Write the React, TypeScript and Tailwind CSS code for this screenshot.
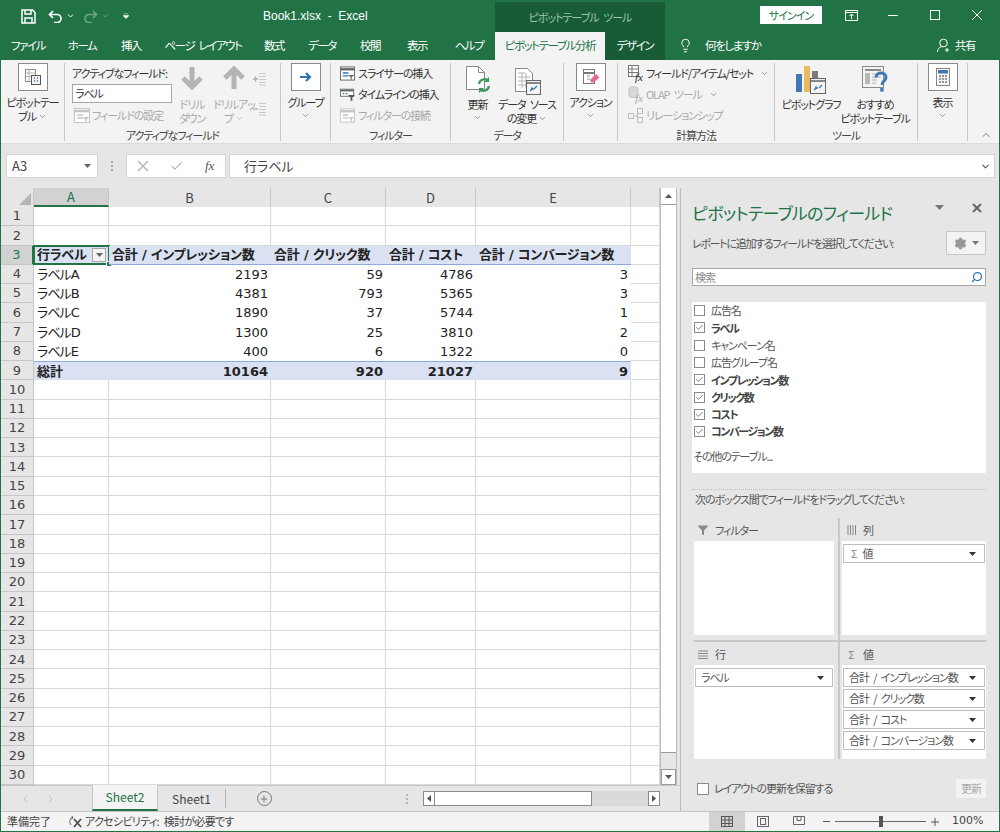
import type { ReactNode } from "react";
import { ChevronDown, Lightbulb, Search, Settings, Plus, Filter, Check } from "lucide-react";
import { clsx } from "clsx";

const tabs = [
  { label: "ファイル", w: "w-[54px]" },
  { label: "ホーム", w: "w-[54px]" },
  { label: "挿入", w: "w-[44px]" },
  { label: "ページ レイアウト", w: "w-[100px]" },
  { label: "数式", w: "w-[42px]" },
  { label: "データ", w: "w-[54px]" },
  { label: "校閲", w: "w-[42px]" },
  { label: "表示", w: "w-[52px]" },
  { label: "ヘルプ", w: "w-[52px]" },
];

const columns = ["A", "B", "C", "D", "E", ""];
const colWidths = ["w-[75px]", "w-[162px]", "w-[115px]", "w-[90px]", "w-[155px]", "flex-1"];

const pivot: Record<number, string[]> = {
  3: ["行ラベル", "合計 / インプレッション数", "合計 / クリック数", "合計 / コスト", "合計 / コンバージョン数"],
  4: ["ラベルA", "2193", "59", "4786", "3"],
  5: ["ラベルB", "4381", "793", "5365", "3"],
  6: ["ラベルC", "1890", "37", "5744", "1"],
  7: ["ラベルD", "1300", "25", "3810", "2"],
  8: ["ラベルE", "400", "6", "1322", "0"],
  9: ["総計", "10164", "920", "21027", "9"],
};

const fields = [
  { name: "広告名", on: false },
  { name: "ラベル", on: true },
  { name: "キャンペーン名", on: false },
  { name: "広告グループ名", on: false },
  { name: "インプレッション数", on: true },
  { name: "クリック数", on: true },
  { name: "コスト", on: true },
  { name: "コンバージョン数", on: true },
];

const rows = Array.from({ length: 30 }, (_, i) => i + 1);

function Sep() {
  return <div className="mt-[3px] h-[78px] w-px shrink-0 bg-[#c8c8c8]" />;
}

function Group({ className, label, children }: { className: string; label?: string; children: ReactNode }) {
  return (
    <div className={clsx("flex h-full shrink-0 flex-col", className)}>
      <div className="h-[69px] shrink-0">{children}</div>
      <div className="text-center text-[11px] leading-[12px] text-[#444]">{label}</div>
    </div>
  );
}

function Chev({ className }: { className?: string }) {
  return <ChevronDown strokeWidth={1.5} className={clsx("size-[9px] text-[#555]", className)} />;
}

function BoxButton({ icon, label }: { icon: ReactNode; label: string }) {
  return (
    <div className="flex flex-col items-center pt-[3px]">
      <div className="flex h-[28px] w-[30px] items-center justify-center border border-[#8a8a8a] bg-white">{icon}</div>
      <div className="mt-[4px] whitespace-nowrap text-[11px] leading-[14px] text-[#333]">{label}</div>
      <Chev className="mt-[2px]" />
    </div>
  );
}

function SmallRow({ icon, label, off, chev }: { icon: ReactNode; label: string; off?: boolean; chev?: boolean }) {
  return (
    <div className={clsx("flex h-[21px] items-center gap-[3px] whitespace-nowrap text-[11px]", off ? "text-[#a9a9a9]" : "text-[#333]")}>
      <span className="flex w-[15px] justify-center">{icon}</span>
      {label}
      {chev && <Chev className="ml-[4px]" />}
    </div>
  );
}

function PivotIcon() {
  return (
    <svg width="18" height="18" viewBox="0 0 18 18" fill="none">
      <rect x="1.5" y="1.5" width="10" height="12" fill="#fff" stroke="#8a8a8a" />
      <path d="M1.5 5h10M1.5 8.5h10M5 1.5v12" stroke="#b0b0b0" />
      <rect x="7.5" y="7.5" width="9" height="9" fill="#f2f2f2" stroke="#555" />
      <path d="M10 10h1M13 10h1M10 13h1M13 13h1" stroke="#2b6cb0" strokeWidth="1.5" />
    </svg>
  );
}

function DrillArrow({ up }: { up?: boolean }) {
  return (
    <svg width="24" height="24" viewBox="0 0 24 24" fill="none" className={up ? "rotate-180" : ""}>
      <path d="M12 1v20M3 12l9 9 9-9" stroke="#b4b4b4" strokeWidth="5" />
    </svg>
  );
}

function TreeIcon({ minus }: { minus?: boolean }) {
  return (
    <svg width="14" height="14" viewBox="0 0 14 14" fill="none">
      <path d="M6 1.5h7M6 4.5h7M6 7.5h7M6 10.5h7M6 13h7" stroke="#c8c8c8" />
      <path d={minus ? "M0 7h5" : "M0 7h5M2.5 4.5v5"} stroke="#b0b0b0" strokeWidth="1.3" />
    </svg>
  );
}

function SlicerIcon({ off }: { off?: boolean }) {
  const c = off ? "#c4c4c4" : "#666";
  return (
    <svg width="16" height="15" viewBox="0 0 16 15" fill="none">
      <rect x="0.5" y="0.5" width="15" height="14" fill="#fff" stroke={c} />
      <path d="M1 3h14" stroke={c} strokeWidth="2.5" />
      {!off && <path d="M3 7h6M3 10h6" stroke="#2f75b5" strokeWidth="1.5" />}
      {off && <path d="M3 7h6M3 10h6" stroke={c} strokeWidth="1.5" />}
      <path d="M9 9h6l-2.4 2.4V14h-1.2v-2.6z" fill={c} />
    </svg>
  );
}

function TimelineIcon() {
  return (
    <svg width="17" height="15" viewBox="0 0 17 15" fill="none">
      <rect x="0.5" y="1.5" width="15" height="8" fill="#fff" stroke="#666" />
      <path d="M1 3h14" stroke="#666" strokeWidth="2" />
      <path d="M3 6.5h2M6.5 6.5h2" stroke="#2f75b5" strokeWidth="1.5" />
      <path d="M9 8h8l-3 3v3.5h-2V11z" fill="#555" />
    </svg>
  );
}

function RefreshIcon() {
  return (
    <svg width="25" height="29" viewBox="0 0 25 29" fill="none">
      <path d="M1.5 1.5h12l6 6v17h-18z" fill="#fff" stroke="#8a8a8a" />
      <path d="M13.5 1.5v6h6" stroke="#8a8a8a" />
      <path d="M14 19a5.5 5.5 0 0 1 9.5-3M24 21a5.5 5.5 0 0 1-9.5 3" stroke="#3a9a5b" strokeWidth="2.2" />
      <path d="M24 12v5h-5zM14 28v-5h5z" fill="#3a9a5b" />
    </svg>
  );
}

function SourceIcon() {
  return (
    <svg width="27" height="28" viewBox="0 0 27 28" fill="none">
      <path d="M1.5 1.5h12l5 5v18h-17z" fill="#fff" stroke="#8a8a8a" />
      <path d="M4 6h7M4 10h12M4 14h12M4 18h12M8 6v15M12 6v15" stroke="#b5b5b5" />
      <rect x="12.5" y="13.5" width="14" height="14" fill="#f4f4f4" stroke="#666" />
      <path d="M13 16h13" stroke="#888" strokeWidth="2" />
      <path d="M16 24l3-3M19 21h-2M19 21v2M23 19l-3 3" stroke="#2f75b5" strokeWidth="1.2" />
    </svg>
  );
}

function ActionIcon() {
  return (
    <svg width="20" height="20" viewBox="0 0 20 20" fill="none">
      <rect x="2.5" y="2.5" width="11" height="14" fill="#fff" stroke="#777" />
      <path d="M2.5 6h11" stroke="#777" strokeWidth="2" />
      <path d="M6 9h3M6 12h3" stroke="#999" />
      <path d="M9 13l6-6 3.5 3.5-6 5h-2z" fill="#e8688a" />
    </svg>
  );
}

function FxIcon({ off, olap }: { off?: boolean; olap?: boolean }) {
  const c = off ? "#c4c4c4" : "#777";
  return (
    <span className="relative flex h-[17px] w-[15px]">
      <svg width="12" height="13" viewBox="0 0 12 13" fill="none">
        {olap ? (
          <path d="M1 3c0-3 9-3 9 0v7c0 2-9 2-9 0z" fill="#d8d8d8" stroke={c} />
        ) : (
          <>
            <rect x="0.5" y="0.5" width="10" height="11" fill="#fff" stroke={c} />
            <path d="M1 4h9M1 7.5h9M4 1v10" stroke={c} />
          </>
        )}
      </svg>
      <span className={clsx("absolute -bottom-[1px] right-0 font-['Liberation_Serif',serif] text-[11px] italic leading-[11px] tracking-normal", off ? "text-[#aaa]" : "text-[#222]")}>fx</span>
    </span>
  );
}

function RelationIcon() {
  return (
    <svg width="15" height="15" viewBox="0 0 15 15" fill="none" stroke="#bdbdbd">
      <rect x="0.5" y="5.5" width="5" height="5" />
      <rect x="9.5" y="0.5" width="5" height="5" />
      <rect x="9.5" y="9.5" width="5" height="5" />
      <path d="M5.5 8h4M9.5 3v9" />
    </svg>
  );
}

function ChartIcon() {
  return (
    <svg width="30" height="28" viewBox="0 0 30 28" fill="none">
      <rect x="0" y="8" width="6" height="18" fill="#3f78b5" />
      <rect x="8" y="0" width="6" height="26" fill="#e9b95f" />
      <rect x="16" y="5" width="6" height="8" fill="#7b7b7b" />
      <rect x="14.5" y="12.5" width="15" height="15" fill="#f4f4f4" stroke="#666" />
      <path d="M15 15h14" stroke="#888" strokeWidth="2" />
      <path d="M18 24l3-3M21 21h-2M21 21v2M26 19l-3 3" stroke="#2f75b5" strokeWidth="1.2" />
    </svg>
  );
}

function RecommendIcon() {
  return (
    <svg width="27" height="28" viewBox="0 0 27 28" fill="none">
      <rect x="0.5" y="0.5" width="21" height="21" fill="#f4f4f4" stroke="#8a8a8a" />
      <path d="M3 4h16" stroke="#8a8a8a" strokeWidth="2" />
      <rect x="3" y="7" width="5" height="11" fill="#b8b8b8" />
      <path d="M10 8h9M10 11h9M10 14h5M10 17h4" stroke="#b0b0b0" />
      <path d="M14 11.5c0-6 10-6 10 0 0 3.5-4 3.5-4 7.5" stroke="#3f78b5" strokeWidth="3" fill="none" />
      <rect x="18.2" y="22" width="3.4" height="3.6" fill="#3f78b5" />
    </svg>
  );
}

function ShowIcon() {
  return (
    <svg width="14" height="18" viewBox="0 0 14 18" fill="none">
      <rect x="0.5" y="0.5" width="13" height="17" fill="#f6f6f6" stroke="#888" />
      <rect x="2" y="2" width="10" height="3.5" fill="#3f78b5" />
      <path d="M3 8h2M6 8h2M9 8h2M3 11h2M6 11h2M9 11h2M3 14h2M6 14h2M9 14h2" stroke="#777" strokeWidth="1.5" />
    </svg>
  );
}

function Ribbon() {
  return (
    <div className="flex h-[84px] shrink-0 items-start border-b border-[#dcdcdc] bg-[#f3f3f3] tracking-[-1.1px]">
      <Group className="w-[63px]">
        <div className="flex flex-col items-center pt-[3px]">
          <div className="flex h-[28px] w-[30px] items-center justify-center border border-[#8a8a8a] bg-white"><PivotIcon /></div>
          <div className="mt-[4px] whitespace-nowrap text-[11px] leading-[14px] text-[#333]">ピボットテー</div>
          <div className="flex items-center gap-[2px] text-[11px] leading-[14px] text-[#333]">ブル<Chev /></div>
        </div>
      </Group>
      <Sep />
      <Group className="w-[215px]" label="アクティブなフィールド">
        <div className="flex pl-[7px] pt-[6px]">
          <div className="w-[100px]">
            <div className="whitespace-nowrap text-[11px] leading-[14px] text-[#333]">アクティブなフィールド:</div>
            <div className="mt-[4px] flex h-[19px] items-center border border-[#a6a6a6] bg-white pl-[2px] text-[11px] text-[#333]">ラベル</div>
            <div className="mt-[3px] flex items-center gap-[2px] whitespace-nowrap text-[11px] leading-[18px] text-[#a9a9a9]">
              <span className="pl-[2px]"><SlicerIcon off /></span>フィールドの設定
            </div>
          </div>
          <div className="ml-[8px] flex w-[24px] flex-col items-center whitespace-nowrap text-[11px] leading-[14px] text-[#a9a9a9]">
            <DrillArrow />
            <div className="mt-[7px]">ドリル</div>
            <div>ダウン</div>
          </div>
          <div className="ml-[14px] flex w-[32px] flex-col items-center whitespace-nowrap text-[11px] leading-[14px] text-[#a9a9a9]">
            <DrillArrow up />
            <div className="mt-[7px]">ドリルアッ</div>
            <div className="flex items-center gap-[2px]">プ<Chev className="text-[#aaa]" /></div>
          </div>
          <div className="ml-[3px] flex flex-col gap-[16px] pt-[6px]">
            <TreeIcon />
            <TreeIcon minus />
          </div>
        </div>
      </Group>
      <Sep />
      <Group className="w-[49px]">
        <BoxButton
          label="グループ"
          icon={
            <svg width="14" height="12" viewBox="0 0 14 12" fill="none">
              <path d="M1 6h10M7 2l4 4-4 4" stroke="#2f75b5" strokeWidth="2.2" />
            </svg>
          }
        />
      </Group>
      <Sep />
      <Group className="w-[119px]" label="フィルター">
        <div className="pl-[9px] pt-[3px]">
          <SmallRow icon={<SlicerIcon />} label="スライサーの挿入" />
          <SmallRow icon={<TimelineIcon />} label="タイムラインの挿入" />
          <SmallRow icon={<SlicerIcon off />} label="フィルターの接続" off />
        </div>
      </Group>
      <Sep />
      <Group className="w-[112px]" label="データ">
        <div className="flex pt-[5px]">
          <div className="ml-[13px] flex w-[27px] flex-col items-center text-[11px] leading-[14px] text-[#333]">
            <RefreshIcon />
            <div className="mt-[3px] whitespace-nowrap">更新</div>
            <Chev className="mt-[2px]" />
          </div>
          <div className="ml-[8px] flex w-[56px] flex-col items-center whitespace-nowrap text-[11px] leading-[14px] text-[#333]">
            <div className="pt-[2px]"><SourceIcon /></div>
            <div className="mt-[2px]">データ ソース</div>
            <div className="flex items-center gap-[2px]">の変更<Chev /></div>
          </div>
        </div>
      </Group>
      <Sep />
      <Group className="w-[53px]">
        <BoxButton label="アクション" icon={<ActionIcon />} />
      </Group>
      <Sep />
      <Group className="w-[156px]" label="計算方法">
        <div className="pl-[10px] pt-[3px]">
          <SmallRow icon={<FxIcon />} label="フィールド/アイテム/セット" chev />
          <SmallRow icon={<FxIcon off olap />} label="OLAP ツール" off chev />
          <SmallRow icon={<RelationIcon />} label="リレーションシップ" off />
        </div>
      </Group>
      <Sep />
      <Group className="w-[142px]" label="ツール">
        <div className="flex pt-[6px] text-[11px] leading-[14px] text-[#333]">
          <div className="ml-[8px] flex w-[56px] flex-col items-center whitespace-nowrap">
            <ChartIcon />
            <div className="mt-[3px]">ピボットグラフ</div>
          </div>
          <div className="ml-[2px] flex w-[68px] flex-col items-center whitespace-nowrap">
            <RecommendIcon />
            <div className="mt-[3px]">おすすめ</div>
            <div>ピボットテーブル</div>
          </div>
        </div>
      </Group>
      <Sep />
      <Group className="w-[49px]">
        <BoxButton label="表示" icon={<ShowIcon />} />
      </Group>
      <Sep />
      <div className="flex h-full flex-1 items-end justify-end pb-[2px] pr-[7px]">
        <ChevronDown strokeWidth={1.5} className="size-[12px] rotate-180 text-[#555]" />
      </div>
    </div>
  );
}

function FormulaBar() {
  return (
    <div className="flex h-[44px] shrink-0 items-start bg-[#e6e6e6] pt-[10px] pl-[5px] pr-[4px]">
      <div className="flex h-[24px] w-[92px] items-center justify-between border border-[#d4d4d4] bg-white pl-[5px] pr-[6px] text-[13px] text-[#444]">
        A3
        <svg width="7" height="4" viewBox="0 0 7 4"><path d="M0 0h7L3.5 4z" fill="#666" /></svg>
      </div>
      <div className="flex h-[24px] w-[28px] items-center justify-center">
        <svg width="3" height="10" viewBox="0 0 3 10"><path d="M1 0v2M1 4v2M1 8v2" stroke="#999" strokeWidth="1.5" /></svg>
      </div>
      <div className="flex h-[24px] w-[100px] items-center border border-[#d4d4d4] bg-white text-[#b0b0b0]">
        <svg width="12" height="12" viewBox="0 0 12 12" className="ml-[10px]"><path d="M1 1l10 10M11 1L1 11" stroke="#b8b8b8" strokeWidth="1.5" /></svg>
        <Check strokeWidth={2} className="ml-[21px] size-[13px]" />
        <span className="ml-[22px] font-['Liberation_Serif',serif] text-[13px] italic text-[#555]">fx</span>
      </div>
      <div className="ml-[3px] flex h-[24px] flex-1 items-center justify-between border border-[#d4d4d4] bg-white pl-[14px] pr-[3px] text-[13px] text-[#444]">
        行ラベル
        <ChevronDown strokeWidth={2.5} className="size-[11px] text-[#555]" />
      </div>
    </div>
  );
}

function Sheet() {
  return (
    <div className="flex min-h-0 flex-1 pr-[3px] font-['DejaVu_Sans','Noto_Sans_CJK_JP',sans-serif] text-[13px] text-[#222] [word-spacing:0px]">
      <div className="flex min-w-0 flex-1 flex-col bg-white">
        <div className="flex h-[19px] shrink-0 bg-[#e6e6e6] text-[13px] text-[#444]">
          <div className="flex w-[33px] shrink-0 items-end justify-end border-r border-[#c6c6c6] p-[2px]">
            <svg width="12" height="12" viewBox="0 0 12 12"><path d="M12 0v12H0z" fill="#b5b5b5" /></svg>
          </div>
          {columns.map((c, i) => (
            <div
              key={i}
              className={clsx(
                "flex shrink-0 items-center justify-center border-r border-[#c6c6c6] font-['Noto_Sans_CJK_JP',sans-serif]",
                colWidths[i],
                i === 0 && "border-b-2 border-b-[#217346] bg-[#d2d2d2] text-[#217346]"
              )}
            >
              {c}
            </div>
          ))}
        </div>
        {rows.map((n) => {
          const data = pivot[n];
          const band = n === 3 || n === 9;
          return (
            <div key={n} className="flex min-h-0 flex-1">
              <div
                className={clsx(
                  "flex w-[33px] shrink-0 items-center justify-center border-b border-r border-[#c6c6c6] text-[13px] text-[#444]",
                  n === 3 ? "border-r-2 border-r-[#217346] bg-[#d2d2d2] text-[#217346]" : "bg-[#e6e6e6]"
                )}
              >
                {n}
              </div>
              {columns.map((_, i) => {
                const inPivot = data && i < 5;
                return (
                  <div
                    key={i}
                    className={clsx(
                      "relative flex shrink-0 items-center whitespace-nowrap px-[3px] leading-none",
                      colWidths[i],
                      !inPivot && "border-b border-r border-[#d9d9d9]",
                      inPivot && band && "bg-[#d9e1f2] font-bold",
                      inPivot && n === 3 && "border-b border-[#8ea9db] tracking-[-0.2px]",
                      inPivot && n === 9 && "border-t border-[#8ea9db]",
                      inPivot && i === 0 && !band && "tracking-[-1px]",
                      inPivot && n !== 3 && i > 0 && "justify-end"
                    )}
                  >
                    {inPivot && data[i]}
                    {inPivot && n === 3 && i === 0 && (
                      <>
                        <span className="ml-auto flex size-[14px] items-center justify-center border border-[#a6a6a6] bg-[#f4f4f4]">
                          <svg width="7" height="4" viewBox="0 0 7 4"><path d="M0 0h7L3.5 4z" fill="#666" /></svg>
                        </span>
                        <span className="absolute -inset-y-px -left-px -right-px border-2 border-[#217346]" />
                        <span className="absolute -bottom-[3px] -right-[3px] size-[6px] border border-white bg-[#217346]" />
                      </>
                    )}
                  </div>
                );
              })}
            </div>
          );
        })}
      </div>
      <div className="flex w-[17px] shrink-0 flex-col border-x border-[#bdbdbd] bg-[#e6e6e6]">
        <div className="flex h-[17px] items-center justify-center border-b border-[#9a9a9a] bg-white">
          <svg width="7" height="4" viewBox="0 0 7 4"><path d="M0 4h7L3.5 0z" fill="#555" /></svg>
        </div>
        <div className="h-[548px] border-b border-[#9a9a9a] bg-white" />
        <div className="flex-1" />
        <div className="flex h-[16px] items-center justify-center border border-[#9a9a9a] bg-white">
          <svg width="7" height="4" viewBox="0 0 7 4"><path d="M0 0h7L3.5 4z" fill="#555" /></svg>
        </div>
      </div>
    </div>
  );
}

function SheetTabs() {
  return (
    <div className="flex h-[26px] shrink-0 items-stretch border-t border-[#c6c6c6] bg-[#e6e6e6] text-[12px] text-[#444]">
      <div className="flex w-[91px] shrink-0 items-center gap-[20px] pl-[22px]">
        <svg width="5" height="8" viewBox="0 0 5 8"><path d="M4 0.5L1 4l3 3.5" stroke="#bdbdbd" fill="none" /></svg>
        <svg width="5" height="8" viewBox="0 0 5 8"><path d="M1 0.5L4 4 1 7.5" stroke="#bdbdbd" fill="none" /></svg>
      </div>
      <div className="-mt-px flex w-[66px] items-center justify-center border-b-2 border-x border-x-[#c6c6c6] border-b-[#217346] bg-[#f3f3f3] text-[#217346]">Sheet2</div>
      <div className="flex w-[67px] items-center justify-center">Sheet1</div>
      <div className="my-[3px] w-px bg-[#b5b5b5]" />
      <div className="flex w-[76px] items-center justify-center">
        <span className="flex size-[15px] items-center justify-center rounded-full border border-[#777]">
          <Plus strokeWidth={2} className="size-[10px] text-[#666]" />
        </span>
      </div>
      <div className="flex w-[121px] items-center justify-end pr-[14px]">
        <svg width="3" height="10" viewBox="0 0 3 10"><path d="M1 0v2M1 4v2M1 8v2" stroke="#a6a6a6" strokeWidth="1.5" /></svg>
      </div>
      <div className="my-[5px] flex w-[237px] bg-[#d9d9d9]">
        <div className="flex w-[12px] items-center justify-center border border-[#8a8a8a] bg-white">
          <svg width="4" height="7" viewBox="0 0 4 7"><path d="M4 0v7L0 3.5z" fill="#555" /></svg>
        </div>
        <div className="w-[157px] border border-l-0 border-[#8a8a8a] bg-white" />
        <div className="flex-1" />
        <div className="flex w-[12px] items-center justify-center border border-[#8a8a8a] bg-white">
          <svg width="4" height="7" viewBox="0 0 4 7"><path d="M0 0v7l4-3.5z" fill="#555" /></svg>
        </div>
      </div>
    </div>
  );
}

function AreaHead({ icon, label }: { icon: ReactNode; label: string }) {
  return (
    <div className="flex h-[23px] items-center gap-[6px] pl-[3px] pt-[1px] text-[11px] text-[#555]">
      <span className="flex w-[12px] justify-center">{icon}</span>
      {label}
    </div>
  );
}

function AreaItem({ label, sigma }: { label: string; sigma?: boolean }) {
  return (
    <div className="flex h-[19px] shrink-0 items-center justify-between border border-[#bdbdbd] bg-white pl-[5px] pr-[8px] text-[11px] text-[#555]">
      <span className={clsx("whitespace-pre", sigma && "pl-[2px]")}>{sigma && <span className="mr-[6px] text-[#888]">Σ</span>}{label}</span>
      <svg width="7" height="4" viewBox="0 0 7 4"><path d="M0 0h7L3.5 4z" fill="#333" /></svg>
    </div>
  );
}

function FieldBox({ children }: { children?: ReactNode }) {
  return <div className="flex h-[94px] flex-col gap-[2px] bg-white px-[1px] pt-[3px]">{children}</div>;
}

function FieldPane() {
  return (
    <div className="flex w-[319px] shrink-0 flex-col border-l border-[#bdbdbd] bg-[#e6e6e6] pl-[11px] pr-[13px] text-[11px] tracking-[-1.1px] text-[#555]">
      <div className="flex h-[43px] items-center pt-[6px]">
        <div className="flex-1 whitespace-nowrap text-[17px] tracking-[-0.7px] text-[#217346]">ピボットテーブルのフィールド</div>
        <svg width="9" height="5" viewBox="0 0 9 5" className="mb-[10px] mr-[28px]"><path d="M0 0h9L4.500 5z" fill="#777" /></svg>
        <svg width="10" height="10" viewBox="0 0 10 10" className="mb-[10px] mr-[4px]"><path d="M1 1l8 8M9 1L1 9" stroke="#666" strokeWidth="2" /></svg>
      </div>
      <div className="flex h-[24px] items-center justify-between">
        <span className="whitespace-nowrap tracking-[-1.3px]">レポートに追加するフィールドを選択してください:</span>
        <span className="flex h-[24px] w-[40px] items-center justify-center gap-[5px] border border-[#c6c6c6] bg-[#f3f3f3]">
          <Settings fill="#999" strokeWidth={2} className="size-[13px] text-[#999]" />
          <svg width="7" height="4" viewBox="0 0 7 4"><path d="M0 0h7L3.500 4z" fill="#777" /></svg>
        </span>
      </div>
      <div className="mt-[13px] flex h-[18px] items-center justify-between border border-[#a6a6a6] bg-white pl-[2px] pr-[2px] text-[#888]">
        検索
        <Search strokeWidth={2.5} className="size-[12px] -scale-x-100 text-[#2f75b5]" />
      </div>
      <div className="mt-[16px] flex h-[171px] flex-col bg-white pl-[2px]">
        {fields.map((f) => (
          <div key={f.name} className={clsx("flex h-[17.3px] shrink-0 items-center gap-[6px]", f.on && "font-bold tracking-[-1.4px] text-[#444]")}>
            <span className="flex size-[11px] items-center justify-center border border-[#8a8a8a] bg-white">
              {f.on && <Check strokeWidth={2} className="size-[9px] text-[#555]" />}
            </span>
            {f.name}
          </div>
        ))}
        <div className="mt-[8px] -ml-[1px] text-[#555]">その他のテーブル...</div>
      </div>
      <div className="mt-[16px] border-t border-dotted border-[#bdbdbd] pl-[3px] leading-[18px]">次のボックス間でフィールドをドラッグしてください:</div>
      <div className="mt-[10px] grid grid-cols-[146px_1fr] pl-[2px]">
        <div className="border-r-2 border-[#c8c8c8] pr-[4px]">
          <AreaHead icon={<Filter fill="#888" strokeWidth={0} className="size-[12px]" />} label="フィルター" />
          <div className="mb-[5px]"><FieldBox /></div>
        </div>
        <div className="pl-[2px]">
          <AreaHead
            icon={<svg width="9" height="10" viewBox="0 0 9 10"><path d="M1 0v10M3.500 0v10M6 0v10M8.500 0v10" stroke="#888" /></svg>}
            label="列"
          />
          <FieldBox><AreaItem label="値" sigma /></FieldBox>
        </div>
        <div className="border-r-2 border-t-2 border-[#c8c8c8] pr-[4px]">
          <AreaHead
            icon={<svg width="10" height="9" viewBox="0 0 10 9"><path d="M0 1h10M0 3.500h10M0 6h10M0 8.500h10" stroke="#888" /></svg>}
            label="行"
          />
          <FieldBox><AreaItem label="ラベル" /></FieldBox>
        </div>
        <div className="border-t-2 border-[#c8c8c8] pl-[2px]">
          <AreaHead icon={<span className="text-[#888]">Σ</span>} label="値" />
          <FieldBox>
            <AreaItem label="合計 / インプレッション数" />
            <AreaItem label="合計 / クリック数" />
            <AreaItem label="合計 / コスト" />
            <AreaItem label="合計 / コンバージョン数" />
          </FieldBox>
        </div>
      </div>
      <div className="mt-[20px] flex items-center justify-between pl-[5px]">
        <div className="flex items-center gap-[5px]">
          <span className="size-[12px] border border-[#8a8a8a] bg-white" />
          レイアウトの更新を保留する
        </div>
        <div className="flex h-[19px] w-[30px] items-center justify-center bg-[#f3f3f3] text-[#aaa]">更新</div>
      </div>
    </div>
  );
}

function StatusBar() {
  return (
    <div className="flex h-[20px] shrink-0 items-center border-t border-[#c6c6c6] bg-[#f3f3f3] text-[11px] text-[#444]">
      <div className="w-[67px] pl-[6px]">準備完了</div>
      <svg width="15" height="14" viewBox="0 0 15 14" fill="none" className="mr-[2px]">
        <path d="M5 2a5 5 0 0 0-2 8M4 1l1 2-2 1" stroke="#666" />
        <path d="M6 4l7 8M13 4l-7 8" stroke="#444" strokeWidth="1.600" />
      </svg>
      <div className="whitespace-nowrap tracking-[-0.7px]">アクセシビリティ: 検討が必要です</div>
      <div className="ml-auto flex h-full items-center pr-[12px]">
        <div className="flex h-full w-[36px] items-center justify-center bg-[#d2d2d2]">
          <svg width="12" height="11" viewBox="0 0 12 11" fill="none" stroke="#555"><rect x="0.5" y="0.5" width="11" height="10" /><path d="M4 0v11M8 0v11M0 4h12M0 7.500h12" /></svg>
        </div>
        <div className="flex w-[36px] justify-center">
          <svg width="12" height="11" viewBox="0 0 12 11" fill="none" stroke="#666"><rect x="0.5" y="0.5" width="11" height="10" /><rect x="3.500" y="2.500" width="5" height="6" /></svg>
        </div>
        <div className="flex w-[36px] justify-center">
          <svg width="12" height="11" viewBox="0 0 12 11" fill="none" stroke="#666"><path d="M0.500 0.500h11v8h-11zM4 0.500v4h4v-4" /></svg>
        </div>
        <div className="ml-[6px] flex items-center text-[#555]">
          <svg width="7" height="1" viewBox="0 0 7 1" className="mr-[5px]"><path d="M0 .5h7" stroke="#555" /></svg>
          <div className="flex h-[11px] w-[91px] items-center">
            <div className="h-px w-[44px] bg-[#666]" />
            <div className="h-[11px] w-[4px] bg-[#555]" />
            <div className="h-px flex-1 bg-[#666]" />
          </div>
          <svg width="8" height="8" viewBox="0 0 8 8" className="ml-[5px]"><path d="M0 4h8M4 0v8" stroke="#555" /></svg>
        </div>
        <div className="w-[48px] pl-[13px] font-['DejaVu_Sans',sans-serif] text-[11px] text-[#444]">100%</div>
      </div>
    </div>
  );
}

export default function App() {
  return (
    <div className="flex h-[832px] w-[1000px] flex-col overflow-hidden border-x border-b border-[#217346] bg-[#e6e6e6] font-['Noto_Sans_CJK_JP',sans-serif] [font-feature-settings:'palt'] [word-spacing:3px]">
      <div className="flex h-[32px] shrink-0 bg-[#217346] text-white">
        <div className="flex w-[494px] items-center">
          <svg width="15" height="15" viewBox="0 0 15 15" fill="none" className="ml-[20px]">
            <path d="M1 1h10.500L14 3.500V14H1z" stroke="#fff" strokeWidth="1.500" />
            <path d="M4 1v4h6V1M4 14V9h7v5" stroke="#fff" strokeWidth="1.500" />
          </svg>
          <svg width="15" height="13" viewBox="0 0 15 13" fill="none" className="ml-[12px]">
            <path d="M5 1L1.500 4.500 5 8M2 4.500h7a4 4 0 0 1 0 8H6" stroke="#fff" strokeWidth="1.700" />
          </svg>
          <svg width="7" height="4" viewBox="0 0 7 4" fill="none" className="ml-[4px]"><path d="M1 .5l2.500 2.500L6 .5" stroke="#fff" /></svg>
          <svg width="15" height="13" viewBox="0 0 15 13" fill="none" className="ml-[9px]">
            <path d="M10 1l3.500 3.500L10 8M13 4.500H6a4 4 0 0 0 0 8h3" stroke="#6aa485" strokeWidth="1.700" />
          </svg>
          <svg width="7" height="4" viewBox="0 0 7 4" fill="none" className="ml-[4px]"><path d="M1 .5l2.500 2.500L6 .5" stroke="#6aa485" /></svg>
          <svg width="6" height="6" viewBox="0 0 7 7" className="ml-[14px]"><path d="M1 1h5M0 3h7l-3.500 3.500z" fill="#fff" stroke="#fff" strokeWidth=".6" /></svg>
          <div className="ml-[134px] whitespace-nowrap font-['Liberation_Sans',sans-serif] text-[12px] [word-spacing:0px]">Book1.xlsx&nbsp; -&nbsp; Excel</div>
        </div>
        <div className="mt-[2px] flex w-[170px] items-center justify-center bg-[#185c37] text-[11px] tracking-[-1px] text-[#9dc5ad]">ピボットテーブル ツール</div>
        <div className="flex flex-1 items-center pb-[2px]">
          <div className="ml-[95px] flex h-[18px] w-[62px] items-center justify-center bg-white text-[11px] tracking-[-1px] text-[#217346]">サインイン</div>
          <svg width="13" height="11" viewBox="0 0 13 11" fill="none" className="ml-[23px]"><path d="M.5.500h12v10H.500zM.5 2.500h12M6.500 9V4M4.500 6l2-2 2 2" stroke="#fff" /></svg>
          <svg width="10" height="1" viewBox="0 0 10 1" className="ml-[30px]"><path d="M0 .5h10" stroke="#fff" /></svg>
          <svg width="10" height="10" viewBox="0 0 10 10" fill="none" className="ml-[32px]"><rect x=".5" y=".5" width="9" height="9" stroke="#fff" /></svg>
          <svg width="10" height="10" viewBox="0 0 10 10" className="ml-[32px]"><path d="M0 0l10 10M10 0L0 10" stroke="#fff" /></svg>
        </div>
      </div>
      <div className="flex h-[28px] shrink-0 bg-[#217346] pb-[1px] text-[11.5px] tracking-[-1.4px] text-white">
        {tabs.map((t) => (
          <div key={t.label} className={clsx("flex shrink-0 items-center justify-center whitespace-nowrap", t.w)}>{t.label}</div>
        ))}
        <div className="-mb-[1px] flex w-[110px] shrink-0 items-center justify-center whitespace-nowrap bg-[#f3f3f3] text-[#217346]">ピボットテーブル分析</div>
        <div className="-mb-[1px] flex w-[60px] shrink-0 items-center justify-center bg-[#185c37]">デザイン</div>
        <div className="flex flex-1 items-center">
          <Lightbulb strokeWidth={1.500} className="ml-[13px] size-[15px]" />
          <span className="ml-[12px]">何をしますか</span>
          <svg width="14" height="15" viewBox="0 0 14 15" fill="none" className="ml-auto"><circle cx="6.500" cy="5" r="3.800" stroke="#fff" /><path d="M.5 14c0-4 3-5.500 6-5.500M10 10v4M8 12h4" stroke="#fff" /></svg>
          <span className="ml-[4px] mr-[24px]">共有</span>
        </div>
      </div>
      <Ribbon />
      <FormulaBar />
      <div className="flex min-h-0 flex-1">
        <div className="flex min-w-0 flex-1 flex-col">
          <Sheet />
          <SheetTabs />
        </div>
        <FieldPane />
      </div>
      <StatusBar />
    </div>
  );
}
